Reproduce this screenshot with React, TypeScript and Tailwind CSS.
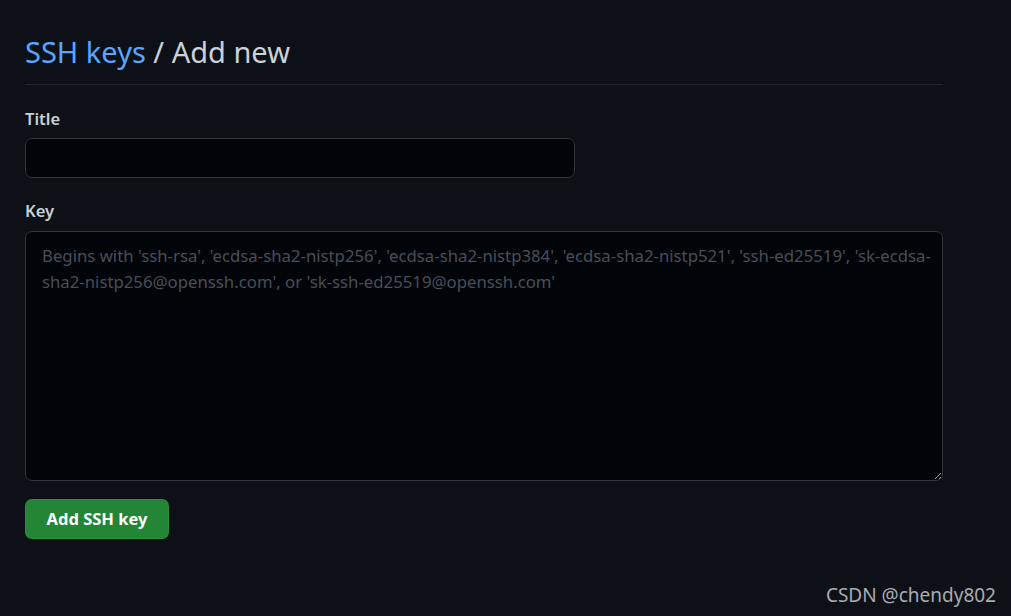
import React from 'react';

const placeholder =
  "Begins with 'ssh-rsa', 'ecdsa-sha2-nistp256', 'ecdsa-sha2-nistp384', 'ecdsa-sha2-nistp521', 'ssh-ed25519', 'sk-ecdsa-sha2-nistp256@openssh.com', or 'sk-ssh-ed25519@openssh.com'";

export default function App() {
  return (
    <div
      className="relative h-[616px] w-[1011px] overflow-hidden bg-[#0d1117] text-[#c9d1d9]"
      style={{ fontFamily: '"Noto Sans", "Open Sans", sans-serif' }}
    >
      <div className="w-[918px] pl-[25px] pt-[33px] box-content">
        <div className="border-b border-[#21262d] pb-[13px]">
          <h2 className="text-[29px] leading-[38px] font-normal">
            <a className="text-[#58a6ff]">SSH keys</a>
            <span className="text-[#c9d1d9]"> / Add new</span>
          </h2>
        </div>

        <form className="pt-[22px]">
          <label className="block text-[16.5px] font-semibold leading-[24px] text-[#c9d1d9]">Title</label>
          <input
            type="text"
            className="mt-[7px] block h-[40px] w-[550px] rounded-[7px] border border-[#30363d] bg-[#010409] px-3 text-[17px] outline-none"
          />

          <label className="mt-[21px] block text-[16.5px] font-semibold leading-[24px] text-[#c9d1d9]">Key</label>
          <textarea
            placeholder={placeholder}
            className="mt-[8px] block h-[250px] w-[918px] rounded-[7px] border border-[#30363d] bg-[#010409] pl-[16px] pr-[8px] pt-[11px] text-[16.75px] leading-[26px] text-[#c9d1d9] placeholder:text-[#484f58] outline-none"
          />

          <button
            type="button"
            className="mt-[18px] flex h-[40px] w-[144px] items-center justify-center rounded-[7px] border border-[#2e9a40]/40 bg-[#238636] text-[16.5px] font-bold text-white"
          >
            Add SSH key
          </button>
        </form>
      </div>

      <div className="absolute bottom-[7px] right-[15px] text-[19px] text-[#a8acb2]">CSDN @chendy802</div>
    </div>
  );
}
